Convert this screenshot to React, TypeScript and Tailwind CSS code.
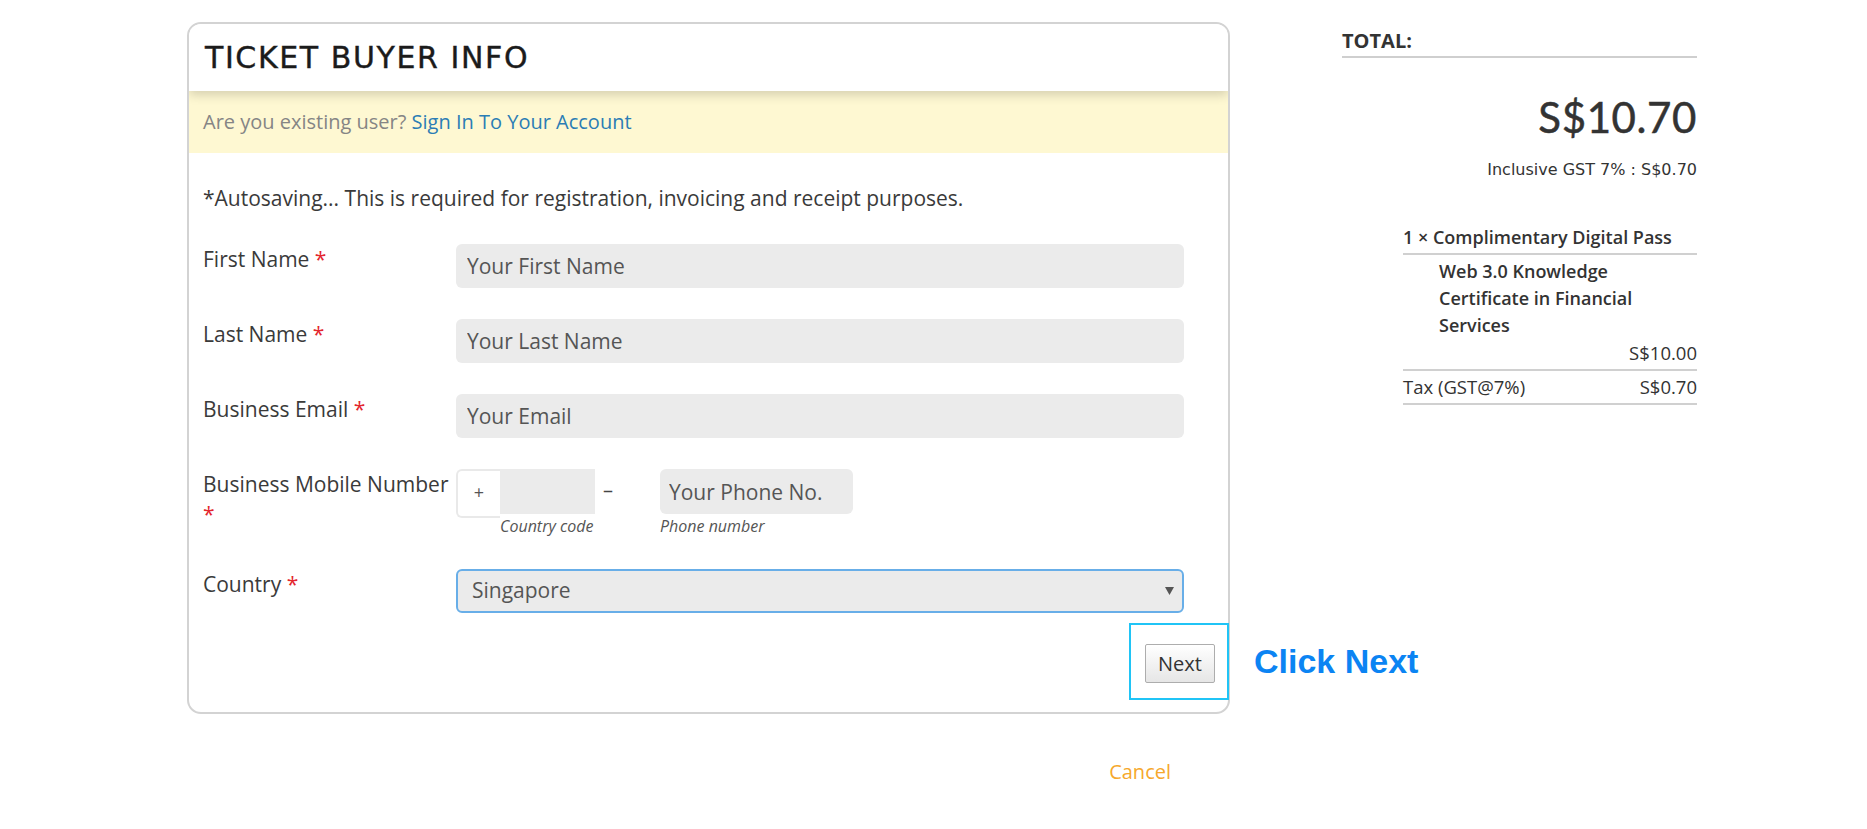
import React from "react";

function Req() {
  return <span className="text-[#e3262d]">*</span>;
}

function Field({ label, children }: { label: React.ReactNode; children: React.ReactNode }) {
  return (
    <div className="flex items-start">
      <div className="w-[253px] shrink-0 pr-[4px] text-[21px] leading-[30px] text-[#3a3a3a]">{label}</div>
      <div className="flex-1">{children}</div>
    </div>
  );
}

function TextInput({ placeholder }: { placeholder: string }) {
  return (
    <input
      placeholder={placeholder}
      className="block h-[44px] w-full rounded-[6px] bg-[#ebebeb] px-[11px] text-[21px] text-[#444] outline-none placeholder:text-[#555]"
    />
  );
}

export default function App() {
  return (
    <div className="min-h-screen bg-white font-['Open_Sans',sans-serif] text-[#333]">
      <div className="flex items-start gap-[112px] pl-[187px] pt-[22px]">
        {/* form column */}
        <div className="w-[1043px] shrink-0">
          <div className="relative">
            <div className="overflow-hidden rounded-[14px] border-2 border-[#d3d3d3] bg-white">
              <div className="relative z-10 bg-white px-[16px] pb-[15px] pt-[16px] shadow-[0_4px_10px_rgba(0,0,0,0.16)]">
                <h1 className="font-['DejaVu_Sans',sans-serif] text-[30px] leading-[36px] tracking-[1.6px] text-[#1b1b1b] [-webkit-text-stroke:0.4px_#1b1b1b]">
                  TICKET BUYER INFO
                </h1>
              </div>
              <div className="bg-[#fef8d2] px-[14px] py-[16px] text-[20px] leading-[30px] text-[#858585]">
                Are you existing user? <a className="text-[#2b7db5]">Sign In To Your Account</a>
              </div>

              <div className="pl-[14px] pr-[44px] pt-[30px]">
                <p className="text-[21px] leading-[30px] text-[#3a3a3a]">
                  *Autosaving... This is required for registration, invoicing and receipt purposes.
                </p>

                <div className="mt-[31px] flex flex-col gap-[31px]">
                  <Field label={<>First Name <Req /></>}>
                    <TextInput placeholder="Your First Name" />
                  </Field>
                  <Field label={<>Last Name <Req /></>}>
                    <TextInput placeholder="Your Last Name" />
                  </Field>
                  <Field label={<>Business Email <Req /></>}>
                    <TextInput placeholder="Your Email" />
                  </Field>
                  <Field label={<>Business Mobile Number <Req /></>}>
                    <div className="flex items-start">
                      <div className="flex items-start">
                        <div className="flex h-[49px] w-[44px] items-start justify-center rounded-l-[6px] border-2 border-r-0 border-[#e9e9e9] bg-white pt-[8px] text-[18px] leading-[26px] text-[#555]">
                          +
                        </div>
                        <div className="w-[95px]">
                          <div className="h-[45px] bg-[#ebebeb]" />
                          <div className="text-[16px] italic leading-[24px] text-[#555]">Country code</div>
                        </div>
                      </div>
                      <div className="ml-[8px] w-[57px] pt-[6px] text-[20px] leading-[30px] text-[#444]">–</div>
                      <div className="w-[193px]">
                        <input
                          placeholder="Your Phone No."
                          className="block h-[45px] w-full rounded-[6px] bg-[#ebebeb] px-[9px] text-[21px] text-[#444] outline-none placeholder:text-[#555]"
                        />
                        <div className="text-[16px] italic leading-[24px] text-[#555]">Phone number</div>
                      </div>
                    </div>
                  </Field>
                  <Field label={<>Country <Req /></>}>
                    <div className="relative">
                      <select
                        defaultValue="Singapore"
                        className="block h-[44px] w-full appearance-none rounded-[6px] border-2 border-[#68aee8] bg-[#ebebeb] px-[14px] text-[21px] text-[#555] outline-none"
                      >
                        <option>Singapore</option>
                        <option>Malaysia</option>
                        <option>Indonesia</option>
                      </select>
                      <svg
                        className="pointer-events-none absolute right-[10px] top-[18px]"
                        width="9"
                        height="8"
                        viewBox="0 0 9 8"
                      >
                        <path d="M0 0h9L4.5 8z" fill="#555" />
                      </svg>
                    </div>
                  </Field>
                </div>
              </div>

              <div className="flex justify-end pb-[29px] pr-[13px] pt-[31px]">
                <button className="h-[39px] w-[70px] rounded-[2px] border border-[#adadad] bg-gradient-to-b from-white to-[#e6e6e6] text-[20px] text-[#333]">
                  Next
                </button>
              </div>
            </div>

            {/* annotation overlay */}
            <div className="pointer-events-none absolute left-[942px] top-[601px] h-[77px] w-[100px] border-2 border-[#20c4f6]" />
            <div className="absolute left-[1067px] top-[619px] whitespace-nowrap font-['Liberation_Sans',Arial,sans-serif] text-[34px] font-bold leading-[40px] text-[#0b84f3]">
              Click Next
            </div>
          </div>

          <div className="flex justify-end pr-[59px] pt-[43px]">
            <a className="text-[20px] leading-[30px] text-[#f6a82c]">Cancel</a>
          </div>
        </div>

        {/* summary column */}
        <div className="w-[355px] shrink-0 pt-[4px]">
          <div className="border-b-2 border-[#cfcfcf] text-[20px] font-bold leading-[30px] text-[#333]">TOTAL:</div>
          <div className="mt-[35px] text-right font-['Lato',sans-serif] text-[42px] leading-[49px] tracking-[0.6px] text-[#333] [-webkit-text-stroke:0.5px_#333]">
            S$10.70
          </div>
          <div className="mt-[16px] text-right font-['DejaVu_Sans',sans-serif] text-[16px] leading-[24px] text-[#333]">
            Inclusive GST 7% : S$0.70
          </div>

          <div className="ml-[61px] mt-[42px] text-[#333]">
            <div className="border-b-2 border-[#d0d0d0] pb-[2px] text-[18px] font-semibold leading-[27px]">
              1 × Complimentary Digital Pass
            </div>
            <div className="border-b-2 border-[#d0d0d0] pb-[3px] pt-[3px] leading-[27px]">
              <div className="w-[250px] pl-[36px] text-[18px] font-semibold">
                Web 3.0 Knowledge Certificate in Financial Services
              </div>
              <div className="text-right text-[18.5px]">S$10.00</div>
            </div>
            <div className="flex justify-between border-b-2 border-[#d0d0d0] pb-[3px] pt-[2px] text-[18.5px] leading-[27px]">
              <span>Tax (GST@7%)</span>
              <span>S$0.70</span>
            </div>
          </div>
        </div>
      </div>
    </div>
  );
}
